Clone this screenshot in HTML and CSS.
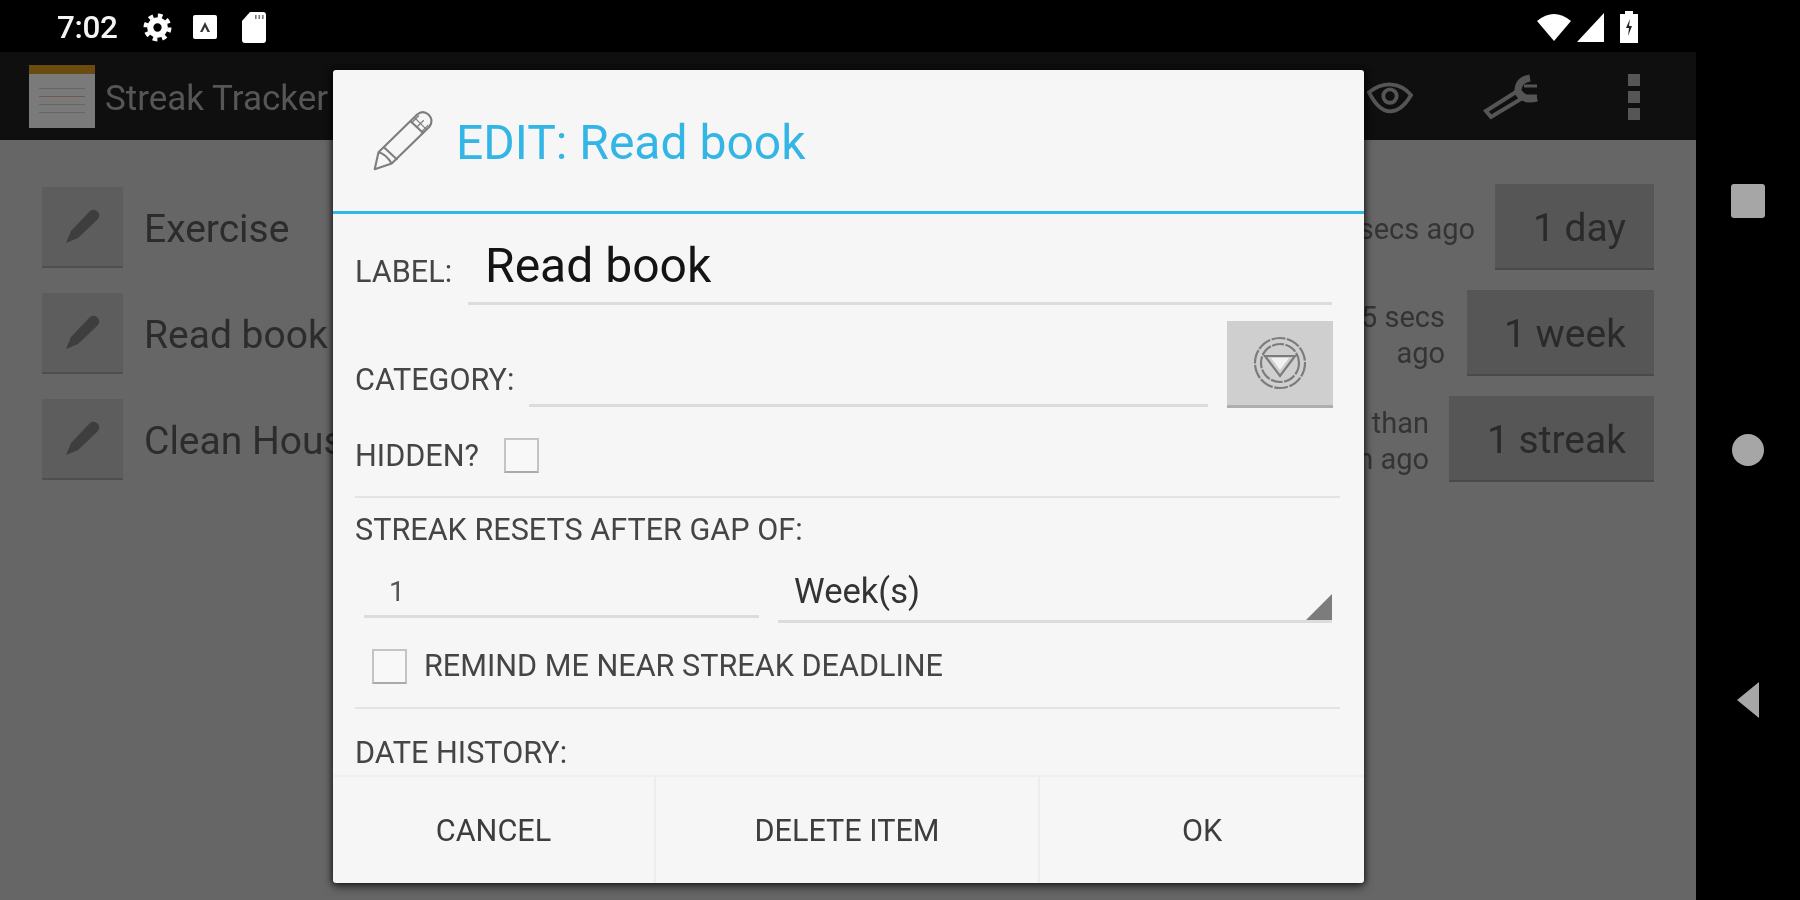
FILE: index.html
```html
<!DOCTYPE html>
<html lang="en">
<head>
<meta charset="utf-8">
<title>Streak Tracker</title>
<link rel="stylesheet" href="styles.css">
</head>
<body>
<div class="device">
  <div class="screen">
    <div class="status">
      <div class="status-left">
        <span class="clock">7:02</span>
        <svg class="ic-gear" viewBox="0 0 28 28"><circle cx="14" cy="14" r="7" fill="none" stroke="#fff" stroke-width="6"/><circle cx="14" cy="14" r="11.5" fill="none" stroke="#fff" stroke-width="4" stroke-dasharray="4.5 4.53"/></svg>
        <svg class="ic-a" viewBox="0 0 24 24"><rect x="0" y="0" width="24" height="24" rx="2" fill="#fff"/><path d="M7 17 L12 7 L17 17 H14.500 L12 12 L9.500 17Z" fill="#333"/></svg>
        <svg class="ic-sd" viewBox="0 0 24 31"><path d="M8 0 H21 Q24 0 24 3 V28 Q24 31 21 31 H3 Q0 31 0 28 V9Z" fill="#fff"/><path d="M13 3h1.600v4H13zM16.500 3h1.600v4h-1.600zM20 3h1.600v4H20z" fill="#777"/></svg>
      </div>
      <div class="status-right">
        <svg class="ic-wifi" viewBox="0 0 34 28"><path d="M0 8 Q17 -6 34 8 L17 28Z" fill="#fff"/></svg>
        <svg class="ic-signal" viewBox="0 0 27 29"><path d="M27 0 V29 H0Z" fill="#fff"/></svg>
        <svg class="ic-batt" viewBox="0 0 18 32"><path d="M5 0h8v3h5v29H0V3h5z" fill="#fff"/><path d="M10 8 L6 17 H9 L8 25 L12 15 H9Z" fill="#222"/></svg>
      </div>
    </div>
    <div class="appbar">
      <div class="logo"><div class="logo-top"></div><div class="logo-line"></div><div class="logo-line logo-line-red"></div><div class="logo-line"></div><div class="logo-line"></div></div>
      <span class="app-title">Streak Tracker</span>
      <div class="app-actions">
        <svg class="ic-eye" viewBox="0 0 48 36"><path d="M2 13 Q14 4 26 5 Q38 6 46 16 Q36 33 24 33 Q12 33 2 13Z" fill="none" stroke="#555" stroke-width="4"/><circle cx="24" cy="17" r="7" fill="none" stroke="#555" stroke-width="4"/></svg>
        <svg class="ic-wrench" viewBox="0 0 58 46"><path d="M36 17 Q36 6 48 4 M36 17 Q42 28 55 24" fill="none" stroke="#555" stroke-width="7"/><path d="M4 37 L34 18 L39 25 L9 43Z" fill="none" stroke="#555" stroke-width="4"/><path d="M42 12 H55 M42 22 H55" stroke="#555" stroke-width="3"/></svg>
        <div class="dots"><i></i><i></i><i></i></div>
      </div>
    </div>
    <div class="content">
      <div class="row row-a">
        <div class="edit-btn"><svg class="mini-pencil" viewBox="0 0 38 38"><path d="M2 36 L7 24 L26 4 Q30 1 34 5 Q37 9 33 13 L14 31Z" fill="#3e3e3e"/></svg></div>
        <div class="item">Exercise</div>
        <div class="ago">15 secs ago</div>
        <div class="count count-day">1 day</div>
      </div>
      <div class="row row-b">
        <div class="edit-btn"><svg class="mini-pencil" viewBox="0 0 38 38"><path d="M2 36 L7 24 L26 4 Q30 1 34 5 Q37 9 33 13 L14 31Z" fill="#3e3e3e"/></svg></div>
        <div class="item">Read book</div>
        <div class="ago ago-two">5 secs<br>ago</div>
        <div class="count count-week">1 week</div>
      </div>
      <div class="row row-c">
        <div class="edit-btn"><svg class="mini-pencil" viewBox="0 0 38 38"><path d="M2 36 L7 24 L26 4 Q30 1 34 5 Q37 9 33 13 L14 31Z" fill="#3e3e3e"/></svg></div>
        <div class="item">Clean House</div>
        <div class="ago ago-three">less than<br>1 min ago</div>
        <div class="count count-streak">1 streak</div>
      </div>
    </div>
  </div>
  <div class="nav">
    <div class="nav-square"></div>
    <div class="nav-circle"></div>
    <div class="nav-back"></div>
  </div>

  <div class="dialog">
    <div class="d-head">
      <svg class="d-pencil" viewBox="0 0 70 70"><g fill="none" stroke="#7d7d7d" stroke-width="2.200" stroke-linejoin="round"><path d="M5 66 L9 48 L50 8 Q56 3 62 8 Q68 14 63 21 L23 60Z"/><path d="M9 48 Q17 50 23 60"/><path d="M15 43 L29 56"/><path d="M43 15 L57 28"/><path d="M47 11 L60 24 M52 9 L44 17 M57 14 L49 22 M62 19 L54 27" stroke-width="1.300"/></g></svg>
      <span class="d-title">EDIT: Read book</span>
    </div>
    <div class="d-body">
      <div class="f-row f-label">
        <span class="lbl lbl-label">LABEL:</span>
        <div class="field field-label">Read book</div>
      </div>
      <div class="f-row f-cat">
        <span class="lbl lbl-cat">CATEGORY:</span>
        <div class="field field-cat"></div>
        <div class="cat-btn"><svg class="cat-icon" viewBox="0 0 54 54"><g fill="none" stroke="#7c7c7c" stroke-width="2.200"><circle cx="27" cy="27" r="25" stroke-dasharray="14 1.500"/><circle cx="27" cy="27" r="19" stroke-dasharray="12 1.500"/><path d="M12 20 H42 L27 40Z"/></g><path d="M18 22 H36 L27 34Z" fill="#f2f2f2"/></svg></div>
      </div>
      <div class="f-row f-hidden">
        <span class="lbl">HIDDEN?</span>
        <span class="check check-hidden"></span>
      </div>
      <div class="divider"></div>
      <div class="lbl lbl-block lbl-streak">STREAK RESETS AFTER GAP OF:</div>
      <div class="f-row f-gap">
        <div class="field field-num">1</div>
        <div class="field field-unit">Week(s)<span class="spin"></span></div>
      </div>
      <div class="f-row f-remind">
        <span class="check"></span>
        <span class="lbl">REMIND ME NEAR STREAK DEADLINE</span>
      </div>
      <div class="divider"></div>
      <div class="lbl lbl-block lbl-date">DATE HISTORY:</div>
    </div>
    <div class="d-foot">
      <div class="d-btn d-btn-cancel">CANCEL</div>
      <div class="d-btn d-btn-delete">DELETE ITEM</div>
      <div class="d-btn d-btn-ok">OK</div>
    </div>
  </div>
</div>
</body>
</html>
```
FILE: styles.css
```css
* { box-sizing: border-box; }
html, body { margin: 0; padding: 0; background: #000; }
body { font-family: Roboto, "Noto Sans", sans-serif; overflow: hidden; }

.device { position: relative; display: flex; width: 1800px; height: 900px; background: #000; overflow: hidden; filter: blur(0.6px); }
.screen { width: 1696px; height: 900px; display: flex; flex-direction: column; }
.nav { width: 104px; height: 900px; display: flex; flex-direction: column; align-items: center; }

/* status bar */
.status { height: 52px; background: #000; display: flex; justify-content: space-between; align-items: center; padding: 2px 58px 0 57px; }
.status-left, .status-right { display: flex; align-items: center; }
.clock { color: #f4f4f4; font-size: 31.500px; font-weight: 500; width: 86px; letter-spacing: -0.4px; }
.ic-gear { width: 29px; height: 29px; margin-right: 21px; }
.ic-a { width: 24px; height: 24px; margin-right: 25px; }
.ic-sd { width: 24px; height: 31px; }
.ic-wifi { width: 34px; height: 28px; margin-right: 6px; }
.ic-signal { width: 27px; height: 29px; margin-right: 16px; }
.ic-batt { width: 18px; height: 32px; }

/* app bar */
.appbar { height: 88px; background: #0f0f0f; display: flex; align-items: center; padding: 0 56px 0 29px; }
.logo { width: 66px; height: 63px; background: #7a7a7a; display: flex; flex-direction: column; gap: 7px; }
.logo-top { height: 9px; background: #6b4c10; margin-bottom: 7px; }
.logo-line { height: 1px; margin: 0 10px; background: #656565; }
.logo-line-red { background: #71584f; }
.app-title { margin-left: 10px; padding-top: 4px; color: #565656; font-size: 35px; }
.app-actions { margin-left: auto; display: flex; align-items: center; padding-top: 2px; }
.ic-eye { width: 46px; height: 36px; margin-right: 69px; }
.ic-wrench { width: 58px; height: 46px; margin-right: 88px; }
.dots { display: flex; flex-direction: column; gap: 5px; }
.dots i { display: block; width: 12px; height: 12px; background: #565656; }

/* list */
.content { flex: 1; background: #666; padding: 34px 42px 0; display: flex; flex-direction: column; }
.row { display: flex; align-items: center; height: 106px; }
.edit-btn { width: 81px; height: 81px; background: #5d5d5d; border-bottom: 2px solid #4f4f4f; display: flex; align-items: center; justify-content: center; flex: none; }
.mini-pencil { width: 38px; height: 38px; }
.item { margin-left: 21px; padding-top: 3px; color: #2c2c2c; font-size: 39px; flex: 1; white-space: nowrap; }
.ago { color: #343434; font-size: 29px; line-height: 36px; padding-top: 3px; text-align: right; white-space: nowrap; margin-right: 20px; }
.count { height: 86px; background: #565656; border-bottom: 2px solid #494949; color: #2a2a2a; font-size: 39px; display: flex; align-items: center; justify-content: flex-end; padding: 4px 28px 0 0; flex: none; }
.count-day { width: 159px; }
.count-week { width: 187px; }
.count-streak { width: 205px; }
.ago-two { margin-right: 22px; }
.ago-three { margin-right: 20px; }

/* dialog */
.dialog { position: absolute; left: 333px; top: 70px; width: 1031px; height: 813px; background: #f6f6f6; border-radius: 3px; box-shadow: 0 4px 10px rgba(0,0,0,.55), -2px 0 5px rgba(0,0,0,.35), 2px 0 5px rgba(0,0,0,.35); display: flex; flex-direction: column; }
.d-head { height: 144px; border-bottom: 3px solid #33b5e5; display: flex; align-items: center; padding: 0 0 0 37px; flex: none; }
.d-pencil { width: 66px; height: 66px; margin-top: -2px; }
.d-title { margin-left: 20px; padding-top: 4px; color: #33b5e5; font-size: 48px; }
.d-body { flex: 1; padding: 0 24px 0 22px; display: flex; flex-direction: column; }
.f-row { display: flex; align-items: flex-end; }
.lbl { color: #454545; font-size: 30.600px; line-height: 32px; white-space: nowrap; }
.lbl-block { display: block; }
.field { border-bottom: 3px solid #dcdcdc; color: #141414; }

.f-label { height: 91px; }
.lbl-label { padding-bottom: 17px; }
.field-label { width: 864px; margin-left: 16px; padding-left: 17px; padding-bottom: 2px; font-size: 48px; line-height: 68px; }

.f-cat { height: 103px; }
.lbl-cat { padding-bottom: 12px; }
.field-cat { width: 679px; height: 30px; margin-left: 15px; margin-bottom: 1px; }
.cat-btn { width: 106px; height: 87px; margin-left: 19px; background: #cfcfcf; border-bottom: 3px solid #aeaeae; display: flex; align-items: center; justify-content: center; }
.cat-icon { width: 54px; height: 54px; }

.f-hidden { height: 63px; align-items: center; margin-top: 16px; }
.check { display: block; width: 35px; height: 35px; border: 2px solid #c4c4c4; border-bottom-color: #aaa; background: #f8f8f8; flex: none; }
.check-hidden { margin-left: 25px; }

.divider { height: 2px; background: #e3e3e3; flex: none; }
.f-hidden + .divider { margin-top: 9px; }
.lbl-streak { margin-top: 16px; }

.f-gap { height: 73px; margin-top: 4px; }
.field-num { width: 395px; margin-left: 9px; padding-left: 25px; font-size: 28px; line-height: 46px; color: #555; margin-bottom: 5px; }
.field-unit { position: relative; width: 554px; margin-left: 19px; padding-left: 16px; font-size: 34.600px; line-height: 58px; color: #333; }
.spin { position: absolute; right: 0; bottom: 0; width: 26px; height: 26px; background: #7c7c7c; clip-path: polygon(100% 0, 100% 100%, 0 100%); }

.f-remind { align-items: center; height: 64px; margin-left: 17px; margin-top: 11px; gap: 17px; }
.f-remind + .divider { margin-top: 9px; }
.lbl-date { margin-top: 28px; }

.d-foot { height: 108px; border-top: 2px solid #efefef; display: flex; flex: none; }
.d-btn { display: flex; align-items: center; justify-content: center; color: #3d3d3d; font-size: 30.600px; border-right: 2px solid #ededed; }
.d-btn-cancel { width: 323px; }
.d-btn-delete { width: 384px; }
.d-btn-ok { flex: 1; border-right: 0; }

/* nav bar */
.nav-square { width: 34px; height: 34px; border-radius: 3px; background: #a6a6a6; margin-top: 184px; }
.nav-circle { width: 32px; height: 32px; border-radius: 50%; background: #a6a6a6; margin-top: 216px; }
.nav-back { width: 22px; height: 36px; background: #a6a6a6; margin-top: 216px; clip-path: polygon(100% 0, 100% 100%, 0 50%); }
```
